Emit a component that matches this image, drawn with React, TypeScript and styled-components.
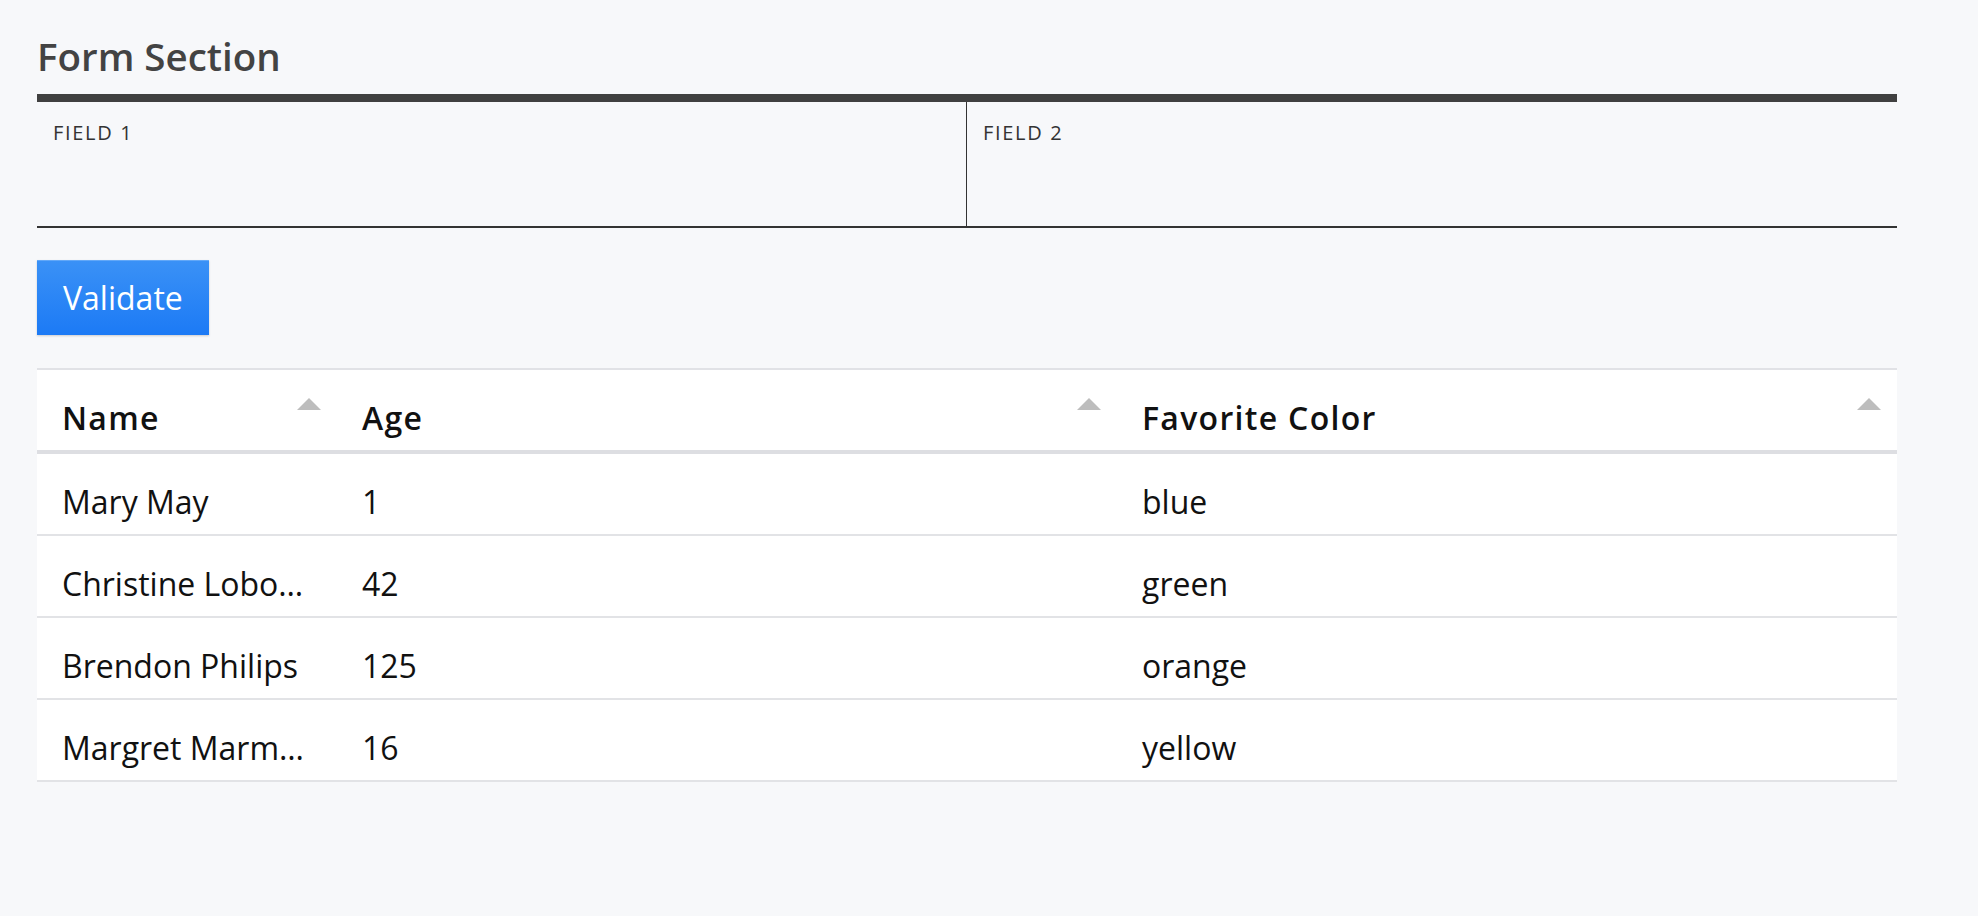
import styled, { createGlobalStyle } from 'styled-components';

const GlobalStyle = createGlobalStyle`
	html, body {
		margin: 0;
		padding: 0;
		background: #f7f8fa;
	}
	body {
		font-family: 'Open Sans', 'Noto Sans', sans-serif;
		color: #111;
	}
	* {
		box-sizing: border-box;
	}
`;

type Person = { name: string; age: number; color: string };

const people: Person[] = [
	{ name: 'Mary May', age: 1, color: 'blue' },
	{ name: 'Christine Lobowski', age: 42, color: 'green' },
	{ name: 'Brendon Philips', age: 125, color: 'orange' },
	{ name: 'Margret Marmajuke', age: 16, color: 'yellow' },
];

const columns = [
	{ key: 'name', label: 'Name', width: 300 },
	{ key: 'age', label: 'Age', width: 780 },
	{ key: 'color', label: 'Favorite Color', width: 780 },
];

function App() {
	return (
		<>
			<GlobalStyle />
			<Page>
				<Form>
					<Title>Form Section</Title>
					<Fields>
						<Field $divider>
							<Label>Field 1</Label>
						</Field>
						<Field>
							<Label>Field 2</Label>
						</Field>
					</Fields>
					<Button type='button'>Validate</Button>
				</Form>

				<Table>
					<colgroup>
						{columns.map((c) => (
							<col key={c.key} style={{ width: c.width }} />
						))}
					</colgroup>
					<thead>
						<tr>
							{columns.map((c) => (
								<HeadCell key={c.key}>
									{c.label}
									<SortArrow />
								</HeadCell>
							))}
						</tr>
					</thead>
					<tbody>
						{people.map((p) => (
							<Row key={p.name}>
								<Cell>{p.name}</Cell>
								<Cell>{p.age}</Cell>
								<Cell>{p.color}</Cell>
							</Row>
						))}
					</tbody>
				</Table>
			</Page>
		</>
	);
}

export default App;

const Page = styled.div`
	width: 1897px;
	padding: 30px 0 40px 37px;
`;

const Form = styled.section`
	display: flex;
	flex-direction: column;
	align-items: flex-start;
`;

const Title = styled.h2`
	margin: 0 0 12px 0;
	font-size: 38.5px;
	line-height: 52px;
	font-weight: 600;
	color: #434343;
`;

const Fields = styled.div`
	display: grid;
	grid-template-columns: 1fr 1fr;
	width: 100%;
	border-top: 8px solid #404040;
	border-bottom: 2px solid #333;
`;

const Field = styled.div<{ $divider?: boolean }>`
	height: 124px;
	padding: 17px 16px 0;
	border-right: ${(p) => (p.$divider ? '1px solid #333' : 'none')};
`;

const Label = styled.div`
	font-size: 20px;
	line-height: 27px;
	letter-spacing: 1.7px;
	text-transform: uppercase;
	color: #333;
`;

const Button = styled.button`
	margin-top: 32px;
	height: 75px;
	padding: 0 26px;
	font-family: inherit;
	font-size: 32px;
	line-height: 44px;
	color: #fff;
	border: none;
	border-top: 1px solid #62a8f8;
	border-radius: 0;
	background: linear-gradient(#3a91f6, #1c7af5);
	box-shadow: 0 1px 2px rgba(0, 0, 0, 0.18);
	cursor: pointer;
`;

const Table = styled.table`
	margin-top: 33px;
	width: 1860px;
	table-layout: fixed;
	border-collapse: collapse;
	background: #fff;
	border-top: 2px solid #e1e2e6;
`;

const HeadCell = styled.th`
	position: relative;
	padding: 26px 25px 10px;
	text-align: left;
	font-size: 32px;
	line-height: 44px;
	font-weight: 600;
	letter-spacing: 1.3px;
	color: #111;
	border-bottom: 4px solid #dddee2;
	white-space: nowrap;
	overflow: hidden;
`;

const SortArrow = styled.span`
	position: absolute;
	top: 28px;
	right: 16px;
	width: 0;
	height: 0;
	border-left: 12px solid transparent;
	border-right: 12px solid transparent;
	border-bottom: 12px solid #bdbdbd;
`;

const Row = styled.tr`
	border-bottom: 2px solid #e2e3e6;
`;

const Cell = styled.td`
	padding: 26px 25px 10px;
	font-size: 32px;
	line-height: 44px;
	color: #111;
	white-space: nowrap;
	overflow: hidden;
	text-overflow: ellipsis;
`;
